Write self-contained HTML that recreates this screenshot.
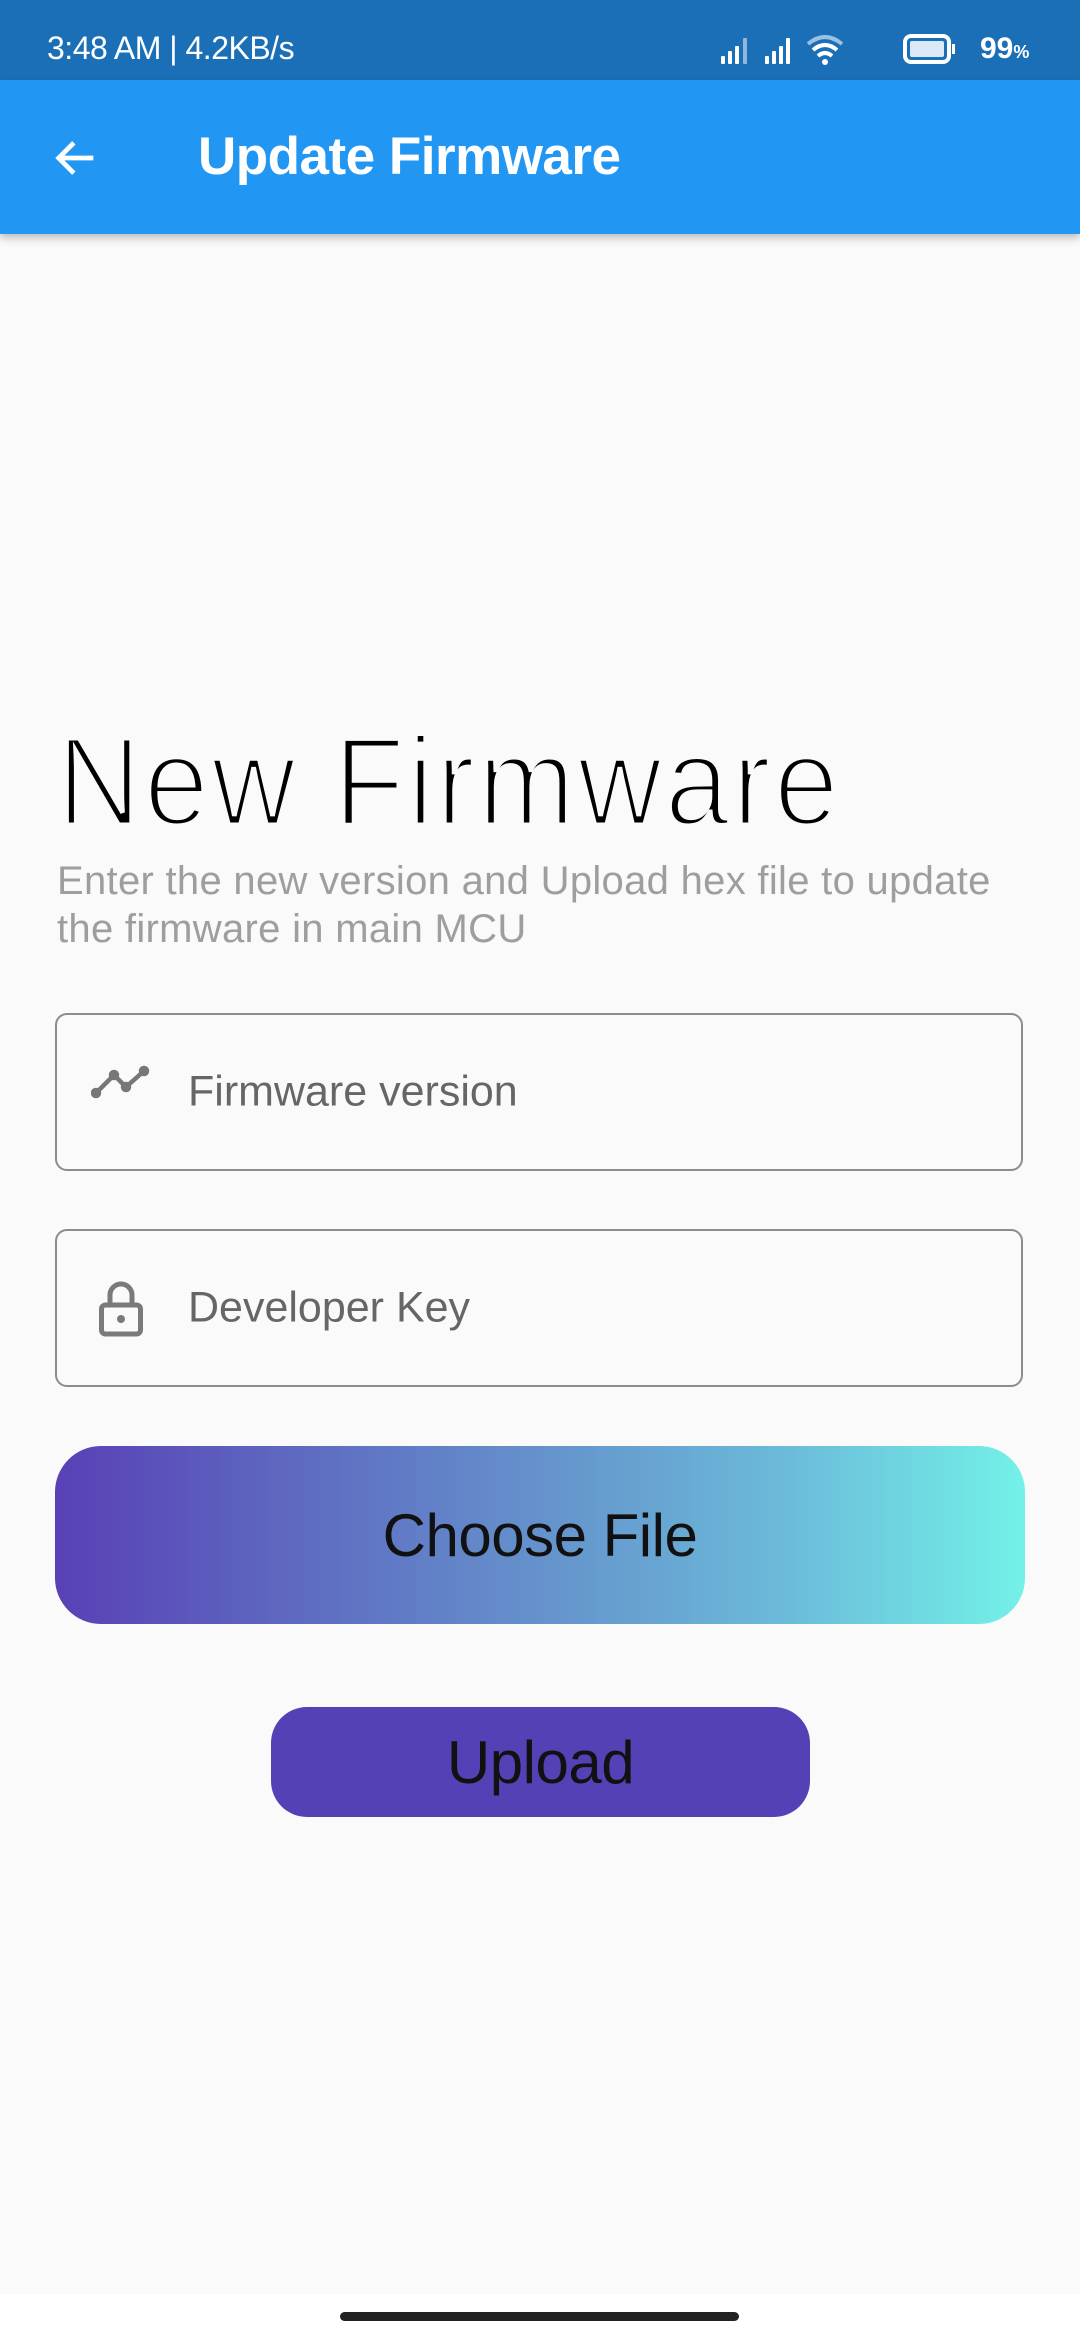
<!DOCTYPE html>
<html><head><meta charset="utf-8"><style>
*{margin:0;padding:0;box-sizing:border-box}
body{width:1080px;height:2340px;background:#fafafa;font-family:"Liberation Sans",sans-serif;position:relative;overflow:hidden}
.abs{position:absolute}
#sb{left:0;top:0;width:1080px;height:80px;background:#1b6fb6;color:#fff}
#ab{left:0;top:80px;width:1080px;height:154px;background:#2196f3;box-shadow:0 4px 8px rgba(0,0,0,.25)}
.field{left:55px;width:968px;height:158px;border:2.5px solid #8c8c8c;border-radius:12px}
.ph{left:131px;font-size:43px;color:#666;top:50%;transform:translateY(-50%)}
</style></head><body>
<div id="sb" class="abs">
 <div class="abs" style="left:47px;top:30px;font-size:32px;letter-spacing:-0.5px">3:48 AM | 4.2KB/s</div>
 <svg class="abs" style="left:715px;top:30px" width="320" height="40" viewBox="0 0 320 40">
  <g fill="#fff"><rect x="6" y="26" width="4" height="8" rx="1"/><rect x="13" y="21" width="4" height="13" rx="1"/><rect x="20" y="16" width="4" height="18" rx="1"/></g>
  <rect x="28" y="8" width="4" height="26" rx="1" fill="#8fb8de"/>
  <g fill="#fff"><rect x="50" y="26" width="4" height="8" rx="1"/><rect x="57" y="21" width="4" height="13" rx="1"/><rect x="64" y="16" width="4" height="18" rx="1"/><rect x="71" y="8" width="4" height="26" rx="1"/></g>
  <path d="M93 14 Q110 0 127 14" stroke="#9cc0e2" stroke-width="4" fill="none"/>
  <path d="M98 20 Q110 10 122 20" stroke="#fff" stroke-width="4" fill="none"/>
  <path d="M103 26 Q110 20 117 26" stroke="#fff" stroke-width="4" fill="none"/>
  <circle cx="110" cy="32" r="3" fill="#fff"/>
  <rect x="190" y="6" width="44" height="26" rx="6" fill="none" stroke="#fff" stroke-width="4"/>
  <rect x="195" y="11" width="34" height="16" rx="2" fill="#dbe9f6"/>
  <rect x="237" y="14" width="3" height="10" fill="#fff"/>
 </svg>
 <div class="abs" style="left:980px;top:32px;font-size:30px;font-weight:bold">99<span style="font-size:18px">%</span></div>
</div>
<div id="ab" class="abs">
 <svg class="abs" style="left:50px;top:52px" width="52" height="52" viewBox="0 0 24 24"><path d="M20 12H5M11 5l-7 7 7 7" stroke="#fff" stroke-width="2.2" fill="none"/></svg>
 <div class="abs" style="left:198px;top:46px;font-size:53px;font-weight:bold;color:#fff;letter-spacing:-0.5px">Update Firmware</div>
</div>
<div class="abs" style="left:57px;top:712px;font-size:126px;color:#000;-webkit-text-stroke:5px #fafafa;letter-spacing:3px;line-height:140px;white-space:nowrap;transform:scaleX(0.925);transform-origin:left">New Firmware</div>
<div class="abs" style="left:57px;top:857px;font-size:40px;color:#9e9e9e;line-height:48px;width:1020px;letter-spacing:0.3px;white-space:nowrap">Enter the new version and Upload hex file to update<br>the firmware in main MCU</div>
<div class="abs field" style="top:1013px">
 <svg class="abs" style="left:34px;top:50px" width="62" height="54" viewBox="0 0 60 54"><g stroke="#777" stroke-width="4.5" fill="#777"><path d="M4 28L22 10L34 22L52 6" fill="none"/><circle cx="4" cy="28" r="3"/><circle cx="22" cy="10" r="3"/><circle cx="34" cy="22" r="3"/><circle cx="52" cy="6" r="3"/></g></svg>
 <div class="abs ph">Firmware version</div>
</div>
<div class="abs field" style="top:1229px">
 <svg class="abs" style="left:40px;top:48px" width="48" height="60" viewBox="0 0 48 60"><path d="M13 26V16a11 11 0 0 1 22 0v10" stroke="#7a7a7a" stroke-width="5" fill="none"/><rect x="4.5" y="26" width="39" height="29" rx="4" fill="none" stroke="#7a7a7a" stroke-width="5"/><circle cx="24" cy="40" r="4" fill="#7a7a7a"/></svg>
 <div class="abs ph">Developer Key</div>
</div>
<div class="abs" style="left:55px;top:1446px;width:970px;height:178px;border-radius:46px;background:linear-gradient(90deg,#5940b6 0%,#5e6ac1 25%,#6592cc 50%,#6bbad9 75%,#73f1e8 100%);display:flex;align-items:center;justify-content:center;font-size:60px;color:#111;letter-spacing:-0.5px">Choose File</div>
<div class="abs" style="left:271px;top:1707px;width:539px;height:110px;border-radius:36px;background:#5441b6;display:flex;align-items:center;justify-content:center;font-size:60px;color:#111;letter-spacing:-0.5px">Upload</div>
<div class="abs" style="left:0;top:2294px;width:1080px;height:46px;background:#fff"></div>
<div class="abs" style="left:340px;top:2312px;width:399px;height:9px;border-radius:5px;background:#222"></div>
</body></html>
